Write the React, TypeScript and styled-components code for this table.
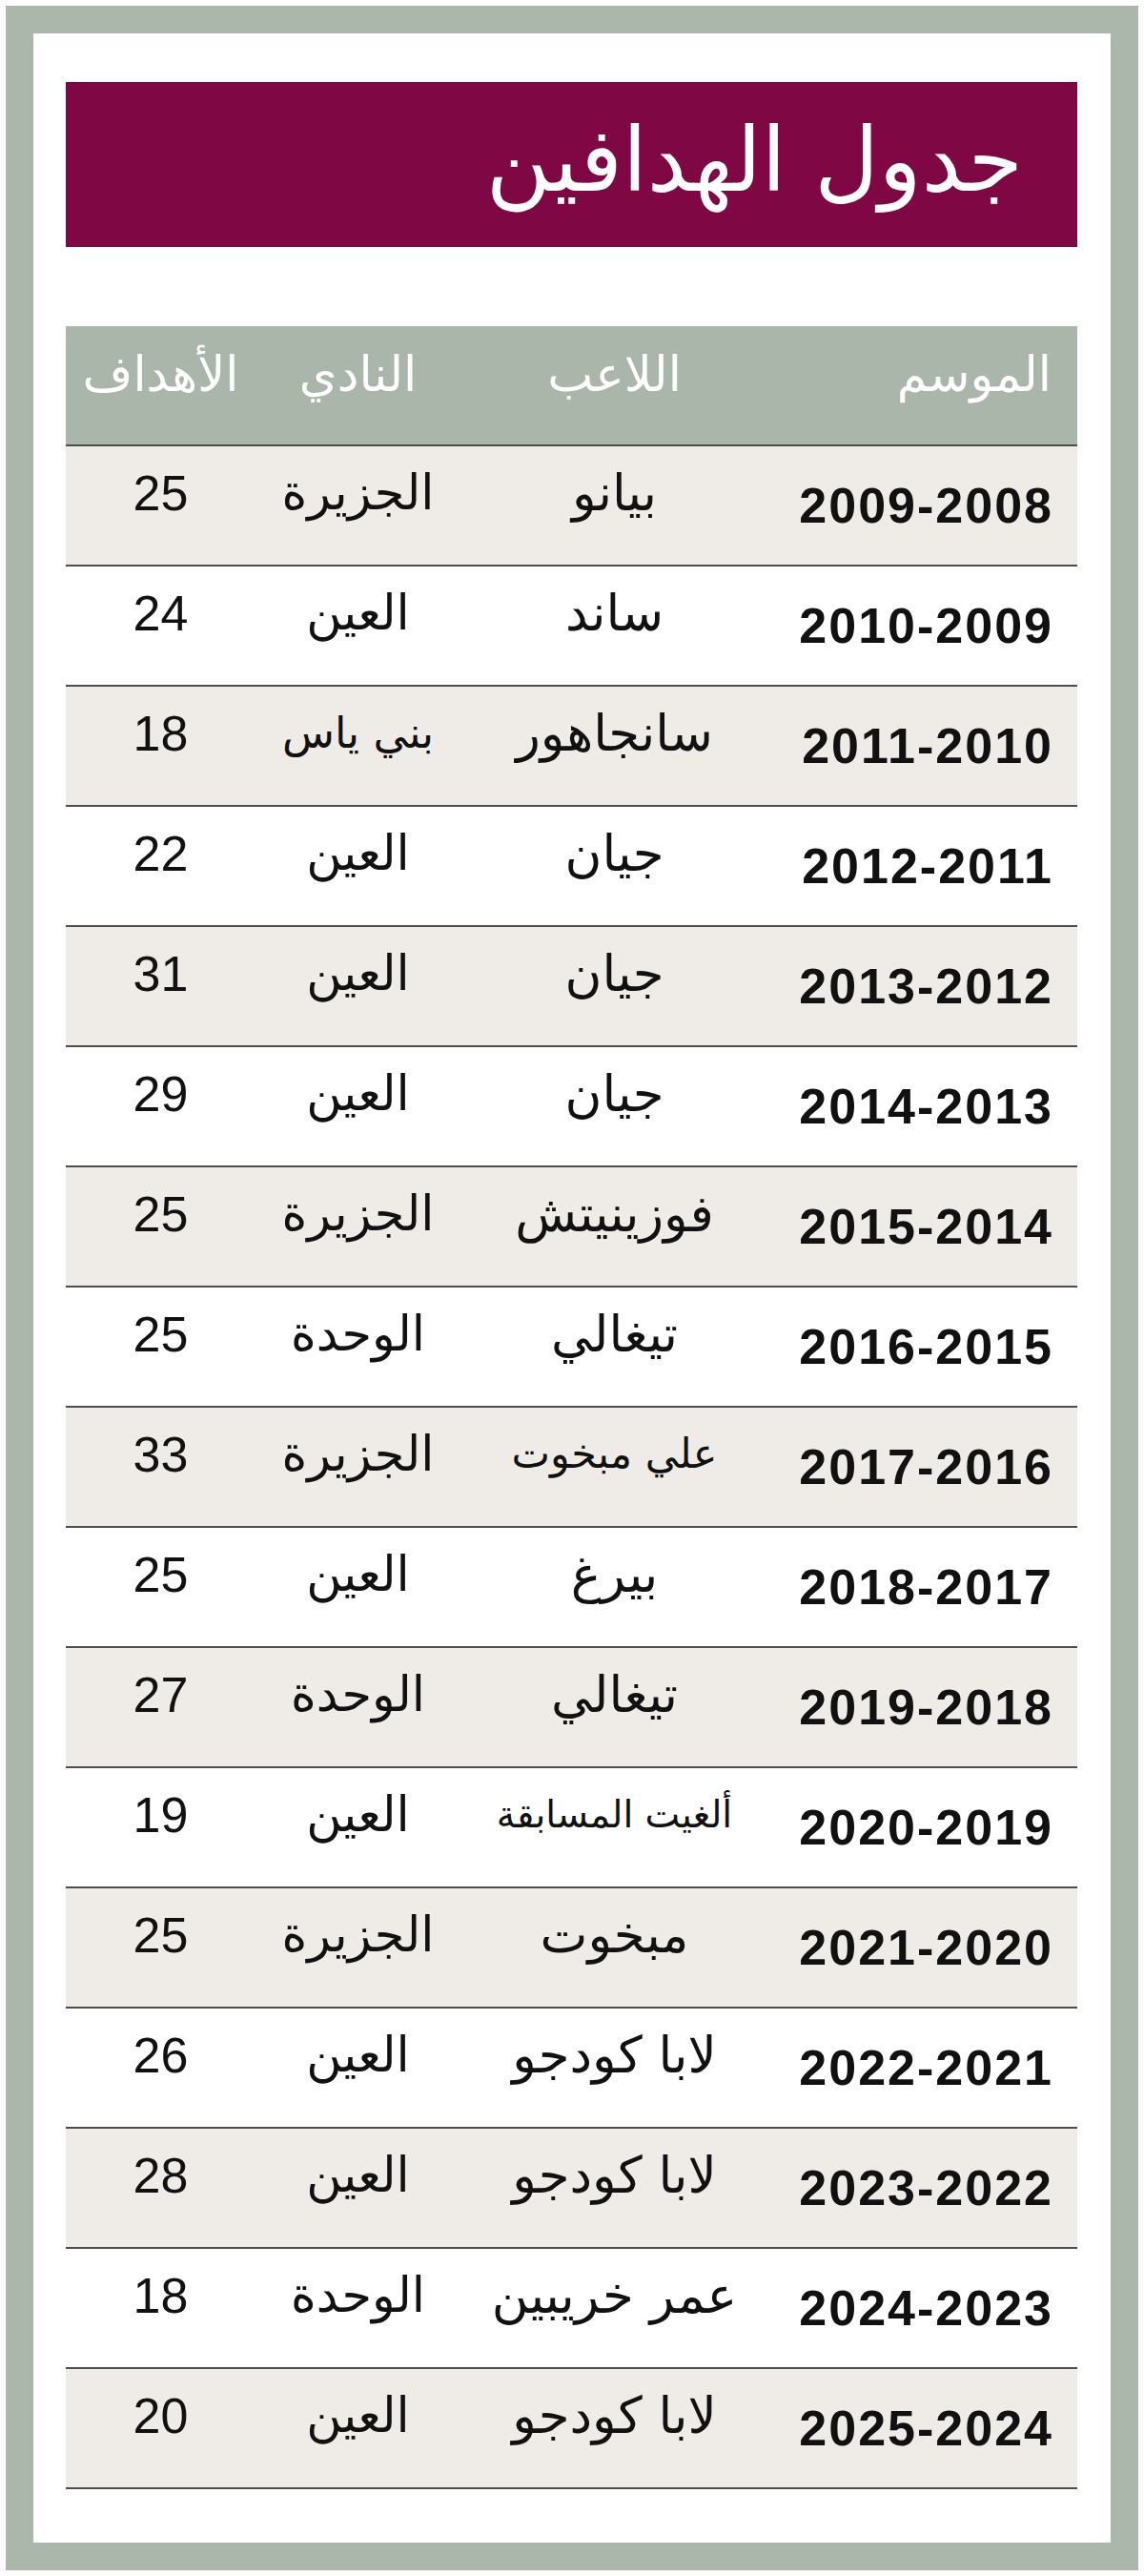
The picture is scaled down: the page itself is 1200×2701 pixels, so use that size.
import React from "react";
import styled, { createGlobalStyle } from "styled-components";

const GlobalStyle = createGlobalStyle`
  html, body { margin: 0; padding: 0; background: #ffffff; }
  * { box-sizing: border-box; }
`;

const Frame = styled.div`
  margin: 6px;
  border: 29px solid #abb7aa;
  background: #ffffff;
  padding: 51px 35px 56px 34px;
  direction: rtl;
`;

const TitleBar = styled.div`
  height: 173px;
  background: #7f0744;
  display: flex;
  align-items: center;
  padding: 0 57px 8px 0;
`;

const Title = styled.h1`
  margin: 0;
  color: #ffffff;
  font-family: "DejaVu Sans", sans-serif;
  font-weight: normal;
  font-size: 93px;
  line-height: 1;
`;

const Table = styled.div`
  margin-top: 83px;
  display: flex;
  flex-direction: column;
`;

const Row = styled.div<{ $variant: "head" | "odd" | "even" }>`
  display: grid;
  grid-template-columns: 324px 323px 215px 1fr;
  height: 126px;
  border-bottom: 2px solid #4d4d4d;
  background: ${(p) =>
    p.$variant === "head" ? "#aab6a9" : p.$variant === "odd" ? "#efece7" : "#ffffff"};
`;

const HeadCell = styled.div<{ $align?: "start" | "center" }>`
  display: flex;
  align-items: center;
  justify-content: ${(p) => (p.$align === "start" ? "flex-start" : "center")};
  padding: ${(p) => (p.$align === "start" ? "0 27px 24px 0" : "0 0 24px 0")};
  color: #ffffff;
  font-family: "DejaVu Sans", sans-serif;
  font-size: 51px;
  line-height: 1;
  white-space: nowrap;
`;

const SeasonCell = styled.div`
  display: flex;
  align-items: center;
  justify-content: flex-start;
  padding: 0 25px 0 0;
  font-family: "Liberation Sans", Arial, sans-serif;
  font-weight: bold;
  font-size: 52px;
  letter-spacing: 2px;
  color: #111111;
  line-height: 1;
`;

const SeasonText = styled.span`
  direction: ltr;
  unicode-bidi: isolate;
`;

const NameCell = styled.div<{ $size: number }>`
  display: flex;
  align-items: center;
  justify-content: center;
  padding-bottom: 28px;
  font-family: "DejaVu Sans", sans-serif;
  font-size: ${(p) => p.$size}px;
  color: #111111;
  line-height: 1;
  white-space: nowrap;
`;

const GoalsCell = styled.div`
  display: flex;
  align-items: center;
  justify-content: center;
  padding-bottom: 26px;
  font-family: "Liberation Sans", Arial, sans-serif;
  font-size: 52px;
  color: #111111;
  line-height: 1;
`;

type Scorer = {
  season: string;
  player: string;
  club: string;
  goals: number;
  playerSize?: number;
  clubSize?: number;
};

const scorers: Scorer[] = [
  { season: "2009-2008", player: "بيانو", club: "الجزيرة", goals: 25 },
  { season: "2010-2009", player: "ساند", club: "العين", goals: 24 },
  { season: "2011-2010", player: "سانجاهور", club: "بني ياس", goals: 18, clubSize: 45 },
  { season: "2012-2011", player: "جيان", club: "العين", goals: 22 },
  { season: "2013-2012", player: "جيان", club: "العين", goals: 31 },
  { season: "2014-2013", player: "جيان", club: "العين", goals: 29 },
  { season: "2015-2014", player: "فوزينيتش", club: "الجزيرة", goals: 25 },
  { season: "2016-2015", player: "تيغالي", club: "الوحدة", goals: 25 },
  { season: "2017-2016", player: "علي مبخوت", club: "الجزيرة", goals: 33, playerSize: 43 },
  { season: "2018-2017", player: "بيرغ", club: "العين", goals: 25 },
  { season: "2019-2018", player: "تيغالي", club: "الوحدة", goals: 27 },
  { season: "2020-2019", player: "ألغيت المسابقة", club: "العين", goals: 19, playerSize: 39 },
  { season: "2021-2020", player: "مبخوت", club: "الجزيرة", goals: 25 },
  { season: "2022-2021", player: "لابا كودجو", club: "العين", goals: 26 },
  { season: "2023-2022", player: "لابا كودجو", club: "العين", goals: 28 },
  { season: "2024-2023", player: "عمر خريبين", club: "الوحدة", goals: 18 },
  { season: "2025-2024", player: "لابا كودجو", club: "العين", goals: 20 },
];

const PLAYER_SIZE = 53;
const CLUB_SIZE = 51;

export default function App() {
  return (
    <>
      <GlobalStyle />
      <Frame>
        <TitleBar>
          <Title>جدول الهدافين</Title>
        </TitleBar>
        <Table>
          <Row $variant="head">
            <HeadCell $align="start">الموسم</HeadCell>
            <HeadCell>اللاعب</HeadCell>
            <HeadCell>النادي</HeadCell>
            <HeadCell>الأهداف</HeadCell>
          </Row>
          {scorers.map((s, i) => (
            <Row key={s.season} $variant={i % 2 === 0 ? "odd" : "even"}>
              <SeasonCell>
                <SeasonText>{s.season}</SeasonText>
              </SeasonCell>
              <NameCell $size={s.playerSize ?? PLAYER_SIZE}>{s.player}</NameCell>
              <NameCell $size={s.clubSize ?? CLUB_SIZE}>{s.club}</NameCell>
              <GoalsCell>{s.goals}</GoalsCell>
            </Row>
          ))}
        </Table>
      </Frame>
    </>
  );
}
